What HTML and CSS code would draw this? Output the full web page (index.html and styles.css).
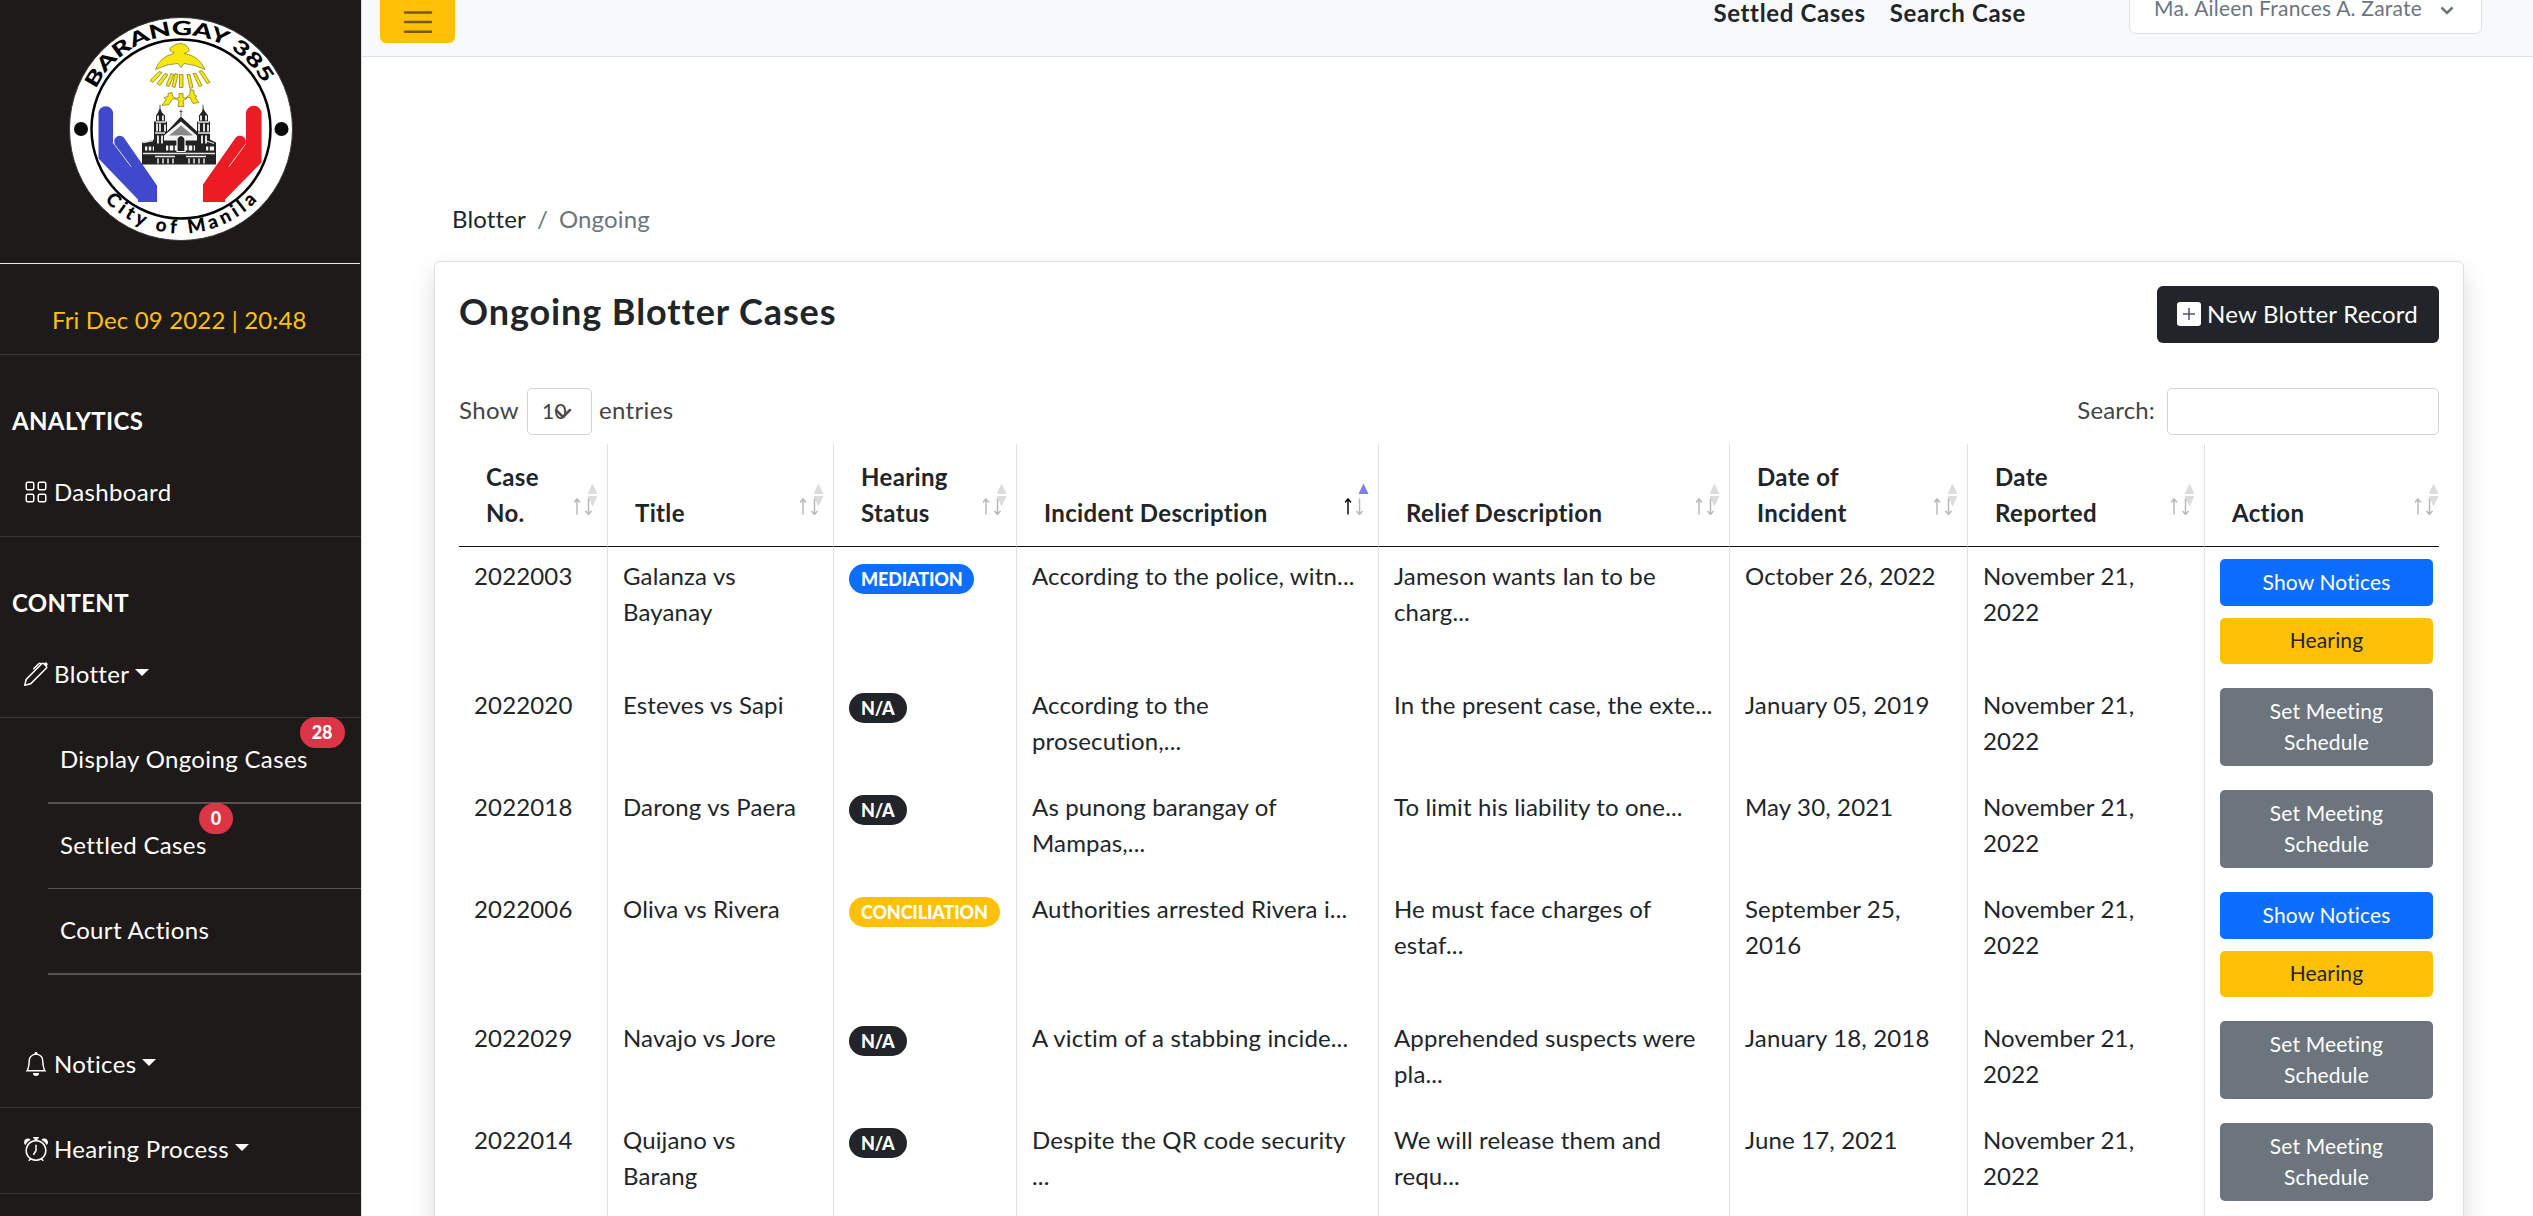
FILE: index.html
```html
<!DOCTYPE html>
<html lang="en">
<head>
<meta charset="utf-8">
<title>Ongoing Blotter Cases</title>
<link rel="stylesheet" href="styles.css">
</head>
<body>
<svg width="0" height="0" class="defs">
  <symbol id="sort" viewBox="0 0 26 32">
    <path class="tri-up" d="M13.500 11.500L18.500 1L23.500 11.500z"/>
    <path class="tri-down" d="M13.500 13.500L18.500 24L23.500 13.500z"/>
    <path class="arrow-up" d="M3 32V17M0 20L3 16.500L6 20"/>
    <path class="arrow-down" d="M14.500 16V31M11.500 28.500L14.500 32L17.500 28.500"/>
  </symbol>
  <symbol id="church" viewBox="0 0 78 62">
    <path d="M18 8L20 3L22 8L25 11V17H27V27L39 14L41 12L43 14L57 27V17H59V11L62 7L63 3L65 7L68 11V17H70V35L76 38V60H2V38L14 35V17H16V11z" fill="#222"/>
    <path d="M24 31L41 17L57 31V36H24zM26 41H55V46H26zM5 42H14V46H5zM66 42H74V46H66z" fill="#f4f4f4"/>
    <path d="M29 31L41 21L53 31z" fill="#888"/>
    <path d="M18 11v5M23 11v5M61 11v5M66 11v5M17 19v8M20 19v8M25 20v7M59 19v8M64 19v8M68 20v7M18 31v8M22 31v8M62 31v8M66 31v8" stroke="#fff" stroke-width="1.700"/>
    <path d="M29 39v9M34 39v9M48 39v9M53 39v9M8 41v6M12 41v6M69 41v6" stroke="#222" stroke-width="1.500"/>
    <path d="M3 49H75M15 52H35M46 52H66M3 38l10-2M65 36l9 3M16 17.500H26M58 17.500H69M15 28.500H25M58 28.500H70" stroke="#e8e8e8" stroke-width="1.300"/>
    <path d="M37 47V34q4-6 8 0v13z" fill="#222" stroke="#fff" stroke-width="1.200"/>
    <path d="M18 54v5M23 54v5M28 54v5M33 54v5M49 54v5M54 54v5M59 54v5M64 54v5" stroke="#ddd" stroke-width="1.600"/>
    <path d="M41 12V5M39.500 7H42.500M20 4V0M63 4V0" stroke="#333" stroke-width=".8" fill="none"/>
  </symbol>
</svg>
<div class="app">
  <aside class="sidebar">
    <div class="brand">
      <svg class="seal" width="226" height="226" viewBox="68 15.500 226 226">
        <circle cx="181" cy="128.500" r="111.500" fill="#fff" stroke="#3a3a3a"/>
        <circle cx="181" cy="128.500" r="89.500" fill="#fff" stroke="#000" stroke-width="2.500"/>
        <circle cx="81" cy="128.500" r="7" fill="#0a0a0a"/>
        <circle cx="281.500" cy="128.500" r="7" fill="#0a0a0a"/>
        <path id="top-arc" d="M87 128.500a94 94 0 0 1 188 0" fill="none"/>
        <path id="bottom-arc" d="M76.500 128.500a104.500 104.500 0 0 0 209 0" fill="none"/>
        <text class="seal-top"><textPath href="#top-arc" startOffset="49%" text-anchor="middle" textLength="207" lengthAdjust="spacingAndGlyphs">BARANGAY 385</textPath></text>
        <text class="seal-bottom"><textPath href="#bottom-arc" startOffset="50%" text-anchor="middle" textLength="171">City of Manila</textPath></text>
        <g fill="#f7e70c" stroke="#7d7520" stroke-width=".7">
          <path d="M174 52Q168 51 170.500 47Q176 42.500 181 43Q187 43.500 189.500 50Q187 52.500 184 53Q199 55 205 69Q195 64 184 63L181 67L178 63Q167 63 155.500 69Q160 56 174 53z"/>
          <path d="M159 71l3 1-9 10-3-2zM165 73l3 1-8 11-3-2zM171 73l3 1-5 12-3-1zM175 73l3 1-3 13-3-1zM179.500 74h3.500v13h-3.500zM187 74l3 0 3 13-3 1zM193 73l3 0 6 12-3 1zM199 71l3-1 8 12-3 1z"/>
          <path d="M168 93l4-1 1 4 3 2-4 1-3 5-7 1 4-6-2-2 4-1zM179 93h4v4l4 1-4 2 1 6h-6l1-6-4-2 4-1zM190 89l4 1v4l3 2-2 1 4 5-6 1-3-6-4 0 4-3z"/>
        </g>
        <use href="#church" x="140" y="104" width="78" height="62"/>
        <path d="M98.500 113a7 7 0 0 1 14.500 0V142L115 144A5.500 5.500 0 0 1 124.500 138L157 185V201.500H138V199L98.500 158z" fill="#4048cc"/>
        <path d="M261.500 113a7.500 7.500 0 0 0-15.500 0V142L245 144A5.500 5.500 0 0 0 235 138L203 184V201.500H225V199L261.500 162z" fill="#ed1c24"/>
        <path d="M113 142L131 166M246 143L229 166" stroke="#fff" stroke-width=".8"/>
      </svg>
    </div>
    <div class="clock">Fri Dec 09 2022 | 20:48</div>
    <h2 class="group">ANALYTICS</h2>
    <a class="nav"><svg width="24" height="24" viewBox="0 0 16 16" fill="none" stroke="#fff"><rect x="1.500" y="1.500" width="5" height="5" rx="1"/><rect x="9.500" y="1.500" width="5" height="5" rx="1"/><rect x="1.500" y="9.500" width="5" height="5" rx="1"/><rect x="9.500" y="9.500" width="5" height="5" rx="1"/></svg>Dashboard</a>
    <h2 class="group">CONTENT</h2>
    <a class="nav parent"><svg width="24" height="24" viewBox="0 0 16 16" fill="#fff"><path d="m13.498.795.149-.149a1.207 1.207 0 1 1 1.707 1.708l-.149.148a1.500 1.500 0 0 1-.059 2.059L4.854 14.854a.5.5 0 0 1-.233.131l-4 1a.5.5 0 0 1-.606-.606l1-4a.5.5 0 0 1 .131-.232l9.642-9.642a.5.5 0 0 0-.642.056L6.854 4.854a.5.5 0 1 1-.708-.708L9.440.854A1.500 1.500 0 0 1 11.500.796a1.500 1.500 0 0 1 1.998-.001zm-.644.766a.5.5 0 0 0-.707 0L1.950 11.756l-.764 3.057 3.057-.764L14.440 3.854a.5.5 0 0 0 0-.708l-1.585-1.585z"/></svg>Blotter<i class="caret"></i></a>
    <div class="sub">
      <a class="sub-link thick"><span>Display Ongoing Cases<b class="count">28</b></span></a>
      <a class="sub-link"><span>Settled Cases<b class="count">0</b></span></a>
      <a class="sub-link thick"><span>Court Actions</span></a>
    </div>
    <a class="nav spaced"><svg width="24" height="24" viewBox="0 0 16 16" fill="#fff"><path d="M8 16a2 2 0 0 0 2-2H6a2 2 0 0 0 2 2zM8 1.918l-.797.161A4.002 4.002 0 0 0 4 6c0 .628-.134 2.197-.459 3.742-.16.767-.376 1.566-.663 2.258h10.244c-.287-.692-.502-1.490-.663-2.258C12.134 8.197 12 6.628 12 6a4.002 4.002 0 0 0-3.203-3.920L8 1.917zM14.220 12c.223.447.481.801.780 1H1c.299-.199.557-.553.780-1C2.680 10.200 3 6.880 3 6c0-2.420 1.720-4.440 4.005-4.901a1 1 0 1 1 1.990 0A5.002 5.002 0 0 1 13 6c0 .88.320 4.200 1.220 6z"/></svg>Notices<i class="caret"></i></a>
    <a class="nav tight"><svg width="24" height="24" viewBox="0 0 16 16" fill="#fff"><path d="M8.500 5.500a.5.5 0 0 0-1 0v3.362l-1.429 2.380a.5.5 0 1 0 .858.515l1.500-2.500A.5.5 0 0 0 8.500 9V5.500z"/><path d="M6.500 0a.5.5 0 0 0 0 1H7v1.070a7.001 7.001 0 0 0-3.273 12.474l-.602.602a.5.5 0 0 0 .707.708l.746-.746A6.970 6.970 0 0 0 8 16a6.970 6.970 0 0 0 3.422-.892l.746.746a.5.5 0 0 0 .707-.708l-.601-.602A7.001 7.001 0 0 0 9 2.070V1h.5a.5.5 0 0 0 0-1h-3zm1.038 3.018a6.093 6.093 0 0 1 .924 0 6 6 0 1 1-.924 0zM0 3.500c0 .753.333 1.429.860 1.887A8.035 8.035 0 0 1 4.387 1.860 2.500 2.500 0 0 0 0 3.500zM13.500 1c-.753 0-1.429.333-1.887.860a8.035 8.035 0 0 1 3.527 3.527A2.500 2.500 0 0 0 13.500 1z"/></svg>Hearing Process<i class="caret"></i></a>
  </aside>

  <main class="main">
    <header class="topbar">
      <button class="burger"><svg width="30" height="24" viewBox="0 0 30 24" stroke="#755a0b" stroke-width="2.500" stroke-linecap="round"><path d="M2 2.500H28M2 12.100H28M2 21.700H28"/></svg></button>
      <nav class="top-links"><a>Settled Cases</a><a>Search Case</a></nav>
      <div class="user">Ma. Aileen Frances A. Zarate<svg width="14" height="9" viewBox="0 0 14 9" fill="none" stroke="#6c757d" stroke-width="2.500"><path d="M1.500 1.500L7 7L12.500 1.500"/></svg></div>
    </header>
    <div class="crumbs"><a>Blotter</a><span>/</span><span>Ongoing</span></div>
    <section class="card">
      <div class="card-head">
        <h1>Ongoing Blotter Cases</h1>
        <button class="new"><svg width="24" height="24" viewBox="0 0 24 24"><rect width="24" height="24" rx="3" fill="#fff"/><path d="M12 6V18M6 12H18" stroke="#55506a" stroke-width="1.500"/></svg>New Blotter Record</button>
      </div>
      <div class="controls">
        <label class="length">Show<span class="select">10<svg width="18" height="11" viewBox="0 0 18 11" fill="none" stroke="#4a5058" stroke-width="2.500" stroke-linecap="round" stroke-linejoin="round"><path d="M2 2L9 9L16 2"/></svg></span>entries</label>
        <label class="search">Search:<input type="text"></label>
      </div>
      <table class="cases">
        <colgroup><col class="c1"><col class="c2"><col class="c3"><col class="c4"><col class="c5"><col class="c6"><col class="c7"><col class="c8"></colgroup>
        <thead><tr>
          <th>Case<br>No.<svg class="sort"><use href="#sort"/></svg></th>
          <th>Title<svg class="sort"><use href="#sort"/></svg></th>
          <th>Hearing<br>Status<svg class="sort"><use href="#sort"/></svg></th>
          <th>Incident Description<svg class="sort asc"><use href="#sort"/></svg></th>
          <th>Relief Description<svg class="sort"><use href="#sort"/></svg></th>
          <th>Date of<br>Incident<svg class="sort"><use href="#sort"/></svg></th>
          <th>Date<br>Reported<svg class="sort"><use href="#sort"/></svg></th>
          <th>Action<svg class="sort edge"><use href="#sort"/></svg></th>
        </tr></thead>
        <tbody>
          <tr><td>2022003</td><td>Galanza vs<br>Bayanay</td><td><span class="badge blue">MEDIATION</span></td><td>According to the police, witn...</td><td>Jameson wants Ian to be<br>charg...</td><td>October 26, 2022</td><td>November 21,<br>2022</td><td><div class="actions"><button class="btn blue">Show Notices</button><button class="btn yellow">Hearing</button></div></td></tr>
          <tr><td>2022020</td><td>Esteves vs Sapi</td><td><span class="badge dark">N/A</span></td><td>According to the<br>prosecution,...</td><td>In the present case, the exte...</td><td>January 05, 2019</td><td>November 21,<br>2022</td><td><div class="actions"><button class="btn grey">Set Meeting<br>Schedule</button></div></td></tr>
          <tr><td>2022018</td><td>Darong vs Paera</td><td><span class="badge dark">N/A</span></td><td>As punong barangay of<br>Mampas,...</td><td>To limit his liability to one...</td><td>May 30, 2021</td><td>November 21,<br>2022</td><td><div class="actions"><button class="btn grey">Set Meeting<br>Schedule</button></div></td></tr>
          <tr><td>2022006</td><td>Oliva vs Rivera</td><td><span class="badge yellow">CONCILIATION</span></td><td>Authorities arrested Rivera i...</td><td>He must face charges of<br>estaf...</td><td>September 25,<br>2016</td><td>November 21,<br>2022</td><td><div class="actions"><button class="btn blue">Show Notices</button><button class="btn yellow">Hearing</button></div></td></tr>
          <tr><td>2022029</td><td>Navajo vs Jore</td><td><span class="badge dark">N/A</span></td><td>A victim of a stabbing incide...</td><td>Apprehended suspects were<br>pla...</td><td>January 18, 2018</td><td>November 21,<br>2022</td><td><div class="actions"><button class="btn grey">Set Meeting<br>Schedule</button></div></td></tr>
          <tr><td>2022014</td><td>Quijano vs<br>Barang</td><td><span class="badge dark">N/A</span></td><td>Despite the QR code security<br>...</td><td>We will release them and<br>requ...</td><td>June 17, 2021</td><td>November 21,<br>2022</td><td><div class="actions"><button class="btn grey">Set Meeting<br>Schedule</button></div></td></tr>
          <tr class="filler"><td></td><td></td><td></td><td></td><td></td><td></td><td></td><td></td></tr>
        </tbody>
      </table>
    </section>
  </main>
</div>
</body>
</html>
```
FILE: styles.css
```css
* { box-sizing: border-box; }
body { margin: 0; background: #fff; color: #212529; font: 24px/36px Lato, sans-serif; letter-spacing: .15px; overflow: hidden; }
button, input { font: inherit; letter-spacing: inherit; border: 0; margin: 0; }
h1, h2 { margin: 0; }
.defs { position: absolute; }
.app { display: flex; height: 1216px; }

/* Sidebar */
.sidebar { flex: 0 0 362px; background: #1e1a19; border-right: 1px solid #dee2e6; color: #fff; overflow: hidden; letter-spacing: .35px; }
.brand { height: 264px; padding: 15.5px 0 0 68px; border-bottom: 1px solid #e8e8e8; margin-right: 1px; }
.seal { display: block; font-family: Lato, sans-serif; letter-spacing: 0; }
.seal-top { font-size: 19.5px; font-weight: 900; }
.seal-bottom { font-size: 19px; font-weight: 900; }
.clock { height: 91px; padding: 38px 0 0 52px; border-bottom: 1px solid #393635; color: #ffc107; letter-spacing: .15px; }
.group { padding: 48px 0 0 12px; margin-bottom: -1px; font-size: 24px; line-height: 36px; font-weight: 700; letter-spacing: .35px; }
.nav { display: flex; align-items: flex-start; height: 99px; padding: 36px 0 0 24px; border-bottom: 1px solid #393635; }
.nav svg { margin: 6px 6px 0 0; flex: none; }
.nav.parent { height: 98px; }
.nav.spaced { height: 133px; padding-top: 71px; }
.nav.tight { height: 86px; padding-top: 23px; }
.caret { margin: 13px 0 0 6px; border: 7px solid transparent; border-top-color: #fff; border-bottom: 0; }
.sub { padding-left: 48px; }
.sub-link { display: block; height: 85px; padding: 23px 0 0 12px; border-bottom: 1px solid #555352; }
.sub-link.thick { height: 86px; border-bottom-width: 2px; }
.sub-link span { position: relative; }
.count { position: absolute; left: 100%; top: -27px; transform: translateX(-8px); padding: 0 12px; height: 31px; border-radius: 16px; background: #dc3545; font-size: 18px; line-height: 31px; font-weight: 900; letter-spacing: 0; }

/* Top bar */
.main { flex: 1; min-width: 0; overflow: hidden; }
.topbar { display: flex; align-items: flex-start; height: 57px; padding-left: 18px; background: #f8f9fa; border-bottom: 1px solid #dee2e6; }
.burger { width: 75px; height: 60px; margin-top: -17px; padding: 18px 0 0; border-radius: 6px; background: #ffc107; line-height: 0; }
.top-links { display: flex; gap: 24px; margin: 0 103px 0 auto; line-height: 26px; font-weight: 700; letter-spacing: .65px; }
.user { display: flex; align-items: flex-start; width: 353px; height: 58px; margin: -24px 51px 0 0; padding: 14px 0 0 24px; border: 1px solid #dee2e6; border-radius: 7px; background: #fff; color: #6c757d; font-size: 21px; line-height: 33px; letter-spacing: .22px; white-space: nowrap; }
.user svg { margin: 15px 0 0 18px; }
.crumbs { display: flex; gap: 11px; margin: 144px 0 0 90px; color: #6c757d; }
.crumbs a { color: #212529; }

/* Card */
.card { margin: 24px 69px 0 72px; height: 1000px; padding: 24px; border: 1px solid #dfdfdf; border-radius: 6px; background: #fff; box-shadow: 0 12px 24px rgba(0, 0, 0, .15); }
.card-head { display: flex; justify-content: space-between; align-items: flex-start; height: 102px; }
h1 { font-size: 36px; line-height: 43px; font-weight: 700; letter-spacing: .9px; padding-top: 4px; }
.new { display: flex; gap: 6px; width: 282px; height: 57px; padding: 10px 0 0 20px; border-radius: 6px; background: #212529; color: #fff; letter-spacing: .22px; }
.new svg { margin-top: 6px; }
.controls { display: flex; justify-content: space-between; height: 56px; color: #444; line-height: 44px; }
.length, .search { display: flex; }
.length { letter-spacing: .35px; }
.select { position: relative; width: 65px; height: 47px; margin: 0 7px 0 8px; padding-left: 14px; border: 1px solid #ced4da; border-radius: 5px; font-size: 21px; line-height: 44px; }
.select svg { position: absolute; left: 26px; top: 19px; }
.search input { width: 272px; height: 47px; margin-left: 12px; border: 1px solid #ced4da; border-radius: 5px; background: #fff; }

/* Table */
.cases { width: 1980px; table-layout: fixed; border-spacing: 0; }
.c1 { width: 149px; } .c2 { width: 226px; } .c3 { width: 183px; } .c4 { width: 362px; }
.c5 { width: 351px; } .c6 { width: 238px; } .c7 { width: 237px; } .c8 { width: 234px; }
th { position: relative; height: 103px; padding: 0 0 15px 27px; border-right: 1px solid #dee2e6; border-bottom: 1px solid #111; text-align: left; vertical-align: bottom; font-weight: 700; letter-spacing: .35px; overflow: hidden; }
td { padding: 11px 0 0 15px; border-right: 1px solid #dee2e6; vertical-align: top; white-space: nowrap; }
th:last-child, td:last-child { border-right: 0; }
.filler { height: 102px; }
.sort { position: absolute; right: 7px; top: 38px; width: 26px; height: 33px; }
.sort.edge { right: -2px; }
.tri-up { fill: var(--tri, #dcdcdc); }
.tri-down { fill: var(--tri-down, #dcdcdc); }
.arrow-up, .arrow-down { fill: none; stroke: #b9b9b9; stroke-width: 1.5; }
.arrow-up { stroke: var(--up, #b9b9b9); }
.sort.asc { --tri: #7b80e2; --tri-down: transparent; --up: #111; }
.badge { display: table; margin-top: 6px; height: 30px; padding: 0 12px; border-radius: 15px; color: #fff; font-size: 18px; line-height: 30px; font-weight: 900; letter-spacing: -.15px; }
td:last-child { padding: 12px 6px 12px 15px; }
.actions { display: grid; gap: 12px; }
.btn { padding: 6.5px 0 8.5px; border-radius: 5px; font-size: 21px; line-height: 31.5px; color: #fff; }
.blue { background: #0d6efd; }
.dark { background: #212529; }
.grey { background: #6c757d; }
.yellow { background: #ffc107; }
.btn.yellow { color: #212529; }
```
